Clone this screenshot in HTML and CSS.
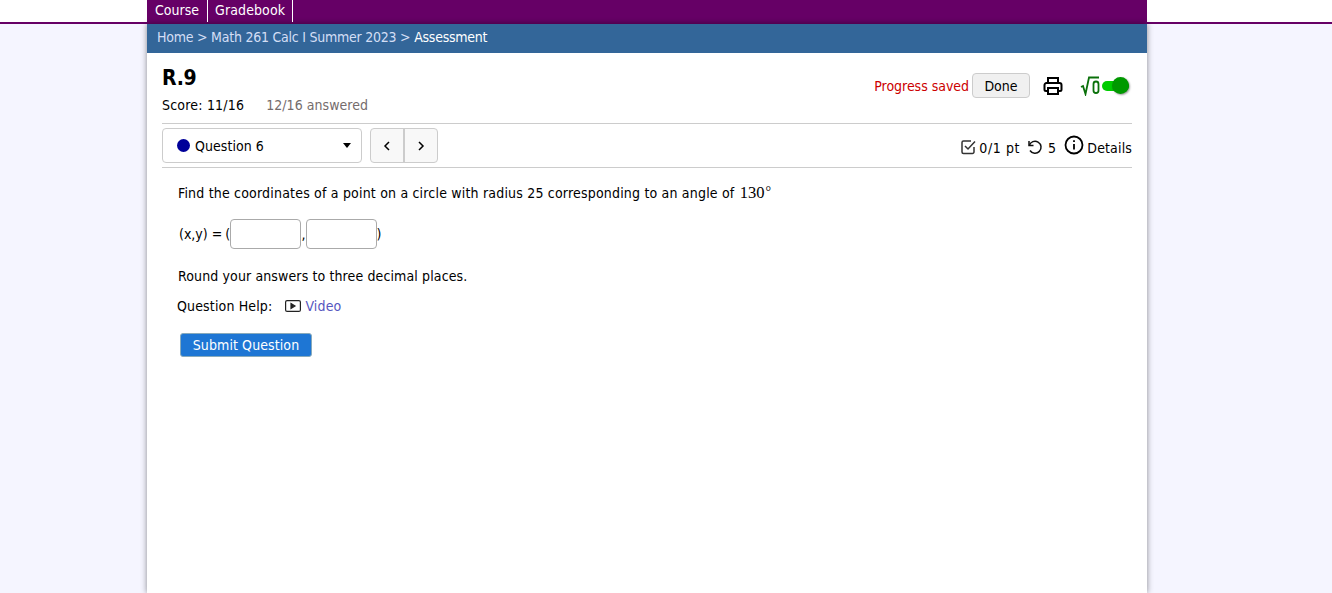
FILE: index.html
```html
<!DOCTYPE html>
<html lang="en">
<head>
<meta charset="utf-8">
<title>R.9</title>
<link rel="stylesheet" href="styles.css">
</head>
<body>
<header class="topband">
  <nav class="topnav">
    <a class="topnav-item">Course</a>
    <a class="topnav-item">Gradebook</a>
  </nav>
</header>
<main class="sheet">
  <div class="crumbs">Home &gt; Math 261 Calc I Summer 2023 &gt; <b class="crumb-current">Assessment</b></div>
  <div class="content">
    <div class="head">
      <div>
        <h1 class="title">R.9</h1>
        <div class="score"><span>Score: 11/16</span><span class="answered">12/16 answered</span></div>
      </div>
      <div class="actions">
        <span class="saved">Progress saved</span>
        <button class="done">Done</button>
        <svg class="print" width="20" height="20" viewBox="0 0 20 20" fill="none" stroke="#000" stroke-width="2"><path d="M5 7V2h10v5"/><path d="M5 15H3a1.500 1.500 0 0 1-1.500-1.500V9A2 2 0 0 1 3.500 7h13a2 2 0 0 1 2 2v4.500A1.500 1.500 0 0 1 17 15h-2"/><path d="M5 12h10v6H5z"/></svg>
        <span class="mathtoggle">
          <svg width="20" height="20" viewBox="0 0 20 20" fill="none" stroke="#0a700a" stroke-width="1.800"><path d="M1 11l2-1 2.500 8L9 1.500h10"/><rect x="13.500" y="5.500" width="5" height="11.500" rx="2.500"/></svg>
          <span class="switch"><span class="knob"></span></span>
        </span>
      </div>
    </div>
    <div class="qbar">
      <div class="qpick">
        <span class="dot"></span><span class="qlabel">Question 6</span><span class="caret"></span>
      </div>
      <div class="pager">
        <span class="page-btn"><svg width="8" height="12" viewBox="0 0 8 12" fill="none" stroke="#000" stroke-width="1.500"><path d="M6 2L2 6l4 4"/></svg></span>
        <span class="page-btn"><svg width="8" height="12" viewBox="0 0 8 12" fill="none" stroke="#000" stroke-width="1.500"><path d="M2 2l4 4-4 4"/></svg></span>
      </div>
      <div class="qmeta">
        <svg class="m1" width="16" height="16" viewBox="0 0 16 16" fill="none" stroke="#333" stroke-width="1.500"><path d="M14 8v5a1.500 1.500 0 0 1-1.500 1.500h-9A1.500 1.500 0 0 1 2 13V3.500A1.500 1.500 0 0 1 3.500 2H11"/><path d="M5 7l3 3 7-7.500"/></svg>
        <span class="pts">0/1 pt</span>
        <svg class="m2" width="16" height="16" viewBox="0 0 16 16" fill="none" stroke="#111" stroke-width="1.500"><path d="M2 2v4.500h4.500"/><path d="M2.300 6.500A6 6 0 1 1 3 11.500"/></svg>
        <span class="tries">5</span>
        <svg class="m3" width="20" height="20" viewBox="0 0 20 20" fill="none" stroke="#000" stroke-width="1.800"><circle cx="10" cy="10" r="8.500"/><path d="M10 9v5.500"/><path d="M10 5.200v1.800"/></svg>
        <span>Details</span>
      </div>
    </div>
    <section class="question">
      <p class="prompt">Find the coordinates of a point on a circle with radius 25 corresponding to an angle of <span class="math">130<span class="deg">°</span></span></p>
      <div class="answer"><span class="xy">(x,y) = </span><span>(</span><input class="box" type="text" aria-label="x"><span>,</span><input class="box" type="text" aria-label="y"><span>)</span></div>
      <p class="round">Round your answers to three decimal places.</p>
      <div class="help"><span>Question Help:</span>
        <svg class="play" width="16" height="12" viewBox="0 0 16 12" fill="none" stroke="#222" stroke-width="1.200"><rect x="0.600" y="0.600" width="14.800" height="10.800" rx="1.500"/><path d="M6 3.500L10 6 6 8.500z" fill="#222"/></svg>
        <a class="video">Video</a>
      </div>
      <button class="submit">Submit Question</button>
    </section>
  </div>
</main>
</body>
</html>
```
FILE: styles.css
```css
* { box-sizing: border-box; }
html, body { margin: 0; height: 100%; }
body {
  background: #f5f5ff;
  font-family: "DejaVu Sans Condensed", "DejaVu Sans", sans-serif;
  font-size: 14px;
  letter-spacing: .15px;
  color: #000;
  overflow: hidden;
}
.topband {
  height: 24px;
  background: #fff;
  border-bottom: 2px solid #660066;
}
.topnav {
  width: 1000px;
  height: 22px;
  margin-left: 147px;
  background: #660066;
  display: flex;
}
.topnav-item {
  width: 61px;
  color: #fff;
  padding-left: 8px;
  line-height: 21px;
  height: 22px;
  border-right: 1px solid #fff;
  letter-spacing: 0;
}
.topnav-item + .topnav-item { width: 85px; padding-left: 7px; letter-spacing: .12px; }
.sheet {
  width: 1000px;
  margin-left: 147px;
  height: 569px;
  background: #fff;
  box-shadow: 0 0 6px rgba(0,0,0,.45);
}
.crumbs {
  height: 29px;
  background: #336699;
  color: #d3def5;
  padding-left: 10px;
  line-height: 27px;
  letter-spacing: -.24px;
}
.crumb-current { font-weight: normal; color: #fff; }
.content { padding: 0 15px; }
.head {
  display: flex;
  justify-content: space-between;
  height: 71px;
  border-bottom: 1px solid #ccc;
}
.title { margin: 11px 0 0; font-size: 21px; font-weight: 700; line-height: 28px; letter-spacing: -.3px; }
.score { margin-top: 4px; line-height: 18px; display: flex; gap: 22px; letter-spacing: .2px; }
.answered { color: #756c6c; letter-spacing: .05px; }
.actions { display: flex; align-items: center; height: 65px; }
.saved { color: #cc0000; letter-spacing: -.03px; }
.done {
  margin-left: 3px;
  width: 58px;
  height: 25px;
  padding: 0;
  background: #f0f0f0;
  border: 1px solid #ccc;
  border-radius: 4px;
  font: inherit;
  color: #000;
}
.print { margin-left: 13px; }
.mathtoggle { margin-left: 17px; margin-right: 3px; display: flex; align-items: center; }
.switch { position: relative; width: 27px; height: 10px; background: #00cc00; border-radius: 5px; margin-left: 2px; }
.knob { position: absolute; right: 0; top: -4px; width: 17px; height: 17px; background: #009900; border-radius: 50%; box-shadow: 1px 1px 2px rgba(0,0,0,.4); }
.qbar {
  display: flex;
  align-items: center;
  height: 44px;
  border-bottom: 1px solid #ccc;
}
.qpick {
  width: 200px;
  height: 35px;
  border: 1px solid #ccc;
  border-radius: 4px;
  display: flex;
  align-items: center;
  padding: 0 10px 0 14px;
}
.dot { width: 13px; height: 13px; border-radius: 50%; background: #000099; }
.qlabel { margin-left: 5px; flex: 1; letter-spacing: .05px; }
.caret { width: 0; height: 0; border-left: 4px solid transparent; border-right: 4px solid transparent; border-top: 5px solid #000; }
.pager { display: flex; margin-left: 8px; height: 35px; border: 1px solid #ccc; border-radius: 4px; background: #f8f8f8; }
.page-btn { width: 32px; display: flex; align-items: center; justify-content: center; }
.page-btn + .page-btn { width: 34px; border-left: 2px solid #ccc; }
.qmeta { margin-left: auto; display: flex; align-items: center; height: 40px; padding-top: 4px; }
.m1 { margin-right: 3px; margin-top: -1px; }
.pts { letter-spacing: .6px; }
.m2 { margin-left: 7px; margin-right: 5px; margin-top: -1px; }
.m3 { margin-left: 8px; margin-right: 3px; margin-top: -5px; }
.question { padding: 15px 0 0 16px; }
.prompt { margin: 0; line-height: 20px; letter-spacing: .19px; }
.math { font-family: "Liberation Serif", serif; font-size: 16.500px; margin-left: 1px; letter-spacing: 0; }
.deg { font-size: 14px; line-height: 0; position: relative; top: -2px; margin-left: 1px; }
.answer { display: flex; align-items: center; margin-top: 16px; height: 30px; }
.xy { white-space: pre; letter-spacing: 0; margin-left: 1px; margin-right: -1px; }
.box { width: 71px; height: 30px; border: 1px solid #aaa; border-radius: 4px; background: #fff; padding: 0; }
.round { margin: 17px 0 0; line-height: 20px; letter-spacing: .12px; }
.help { display: flex; align-items: center; margin: 10px 0 0 -1px; height: 20px; }
.play { margin-left: 13px; margin-right: 4px; }
.video { color: #5656c0; }
.submit {
  display: block;
  margin: 17px 0 0 2px;
  width: 132px;
  height: 24px;
  padding: 0;
  background: #1e76d4;
  color: #fff;
  border: 1px solid #8ab;
  border-radius: 3px;
  font: inherit;
  letter-spacing: .1px;
}
```
